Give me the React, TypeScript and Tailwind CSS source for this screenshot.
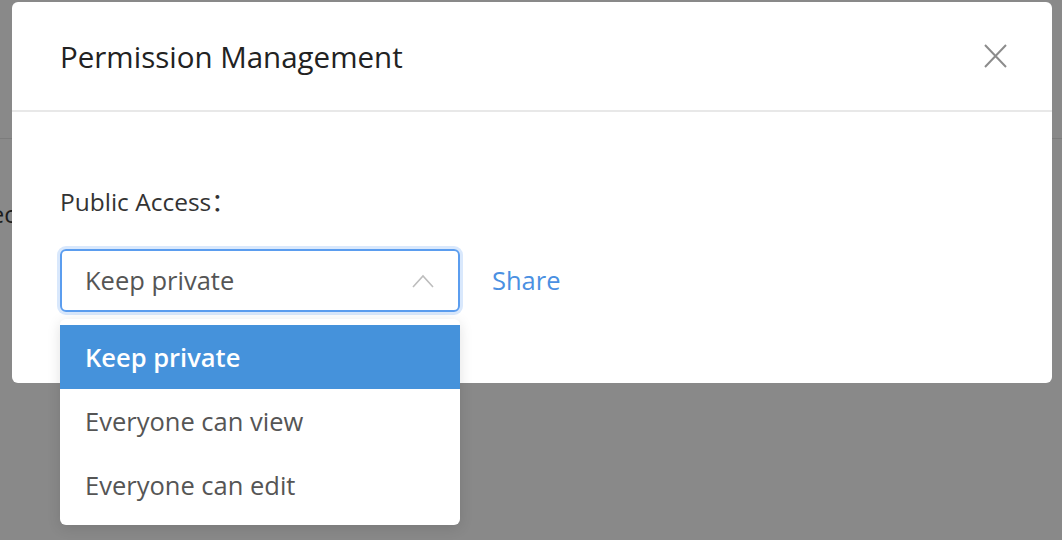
import React from 'react'

const FONT = "font-['Open_Sans','Noto_Sans','Noto_Sans_CJK_SC',sans-serif]"

const options = ['Keep private', 'Everyone can view', 'Everyone can edit']

function CloseIcon() {
  return (
    <svg width="23" height="24" viewBox="0 0 23 24" fill="none">
      <path d="M1 1L22 23M22 1L1 23" stroke="#8c8c8c" strokeWidth="2" />
    </svg>
  )
}

function ChevronUp() {
  return (
    <svg width="22" height="14" viewBox="0 0 22 14" fill="none">
      <path d="M1 13L11 2L21 13" stroke="#bdbdbd" strokeWidth="1.6" />
    </svg>
  )
}

function PermissionSelect() {
  return (
    <div className="relative w-[400px]">
      <div className="flex h-[63px] items-center justify-between rounded-[6px] border-2 border-[#5b9def] pl-[23px] pr-[24px] shadow-[0_0_0_3px_#d9e8fc]">
        <span className="text-[25.5px] text-[#555]">Keep private</span>
        <ChevronUp />
      </div>
      <div className="absolute left-0 top-[70px] w-[400px] rounded-[6px] bg-white pt-[6px] pb-[8px] shadow-[0_3px_14px_rgba(0,0,0,0.12)]">
        {options.map((o, i) => (
          <div
            key={o}
            className={
              i === 0
                ? 'flex h-16 items-center bg-[#4592db] pl-[25px] text-[25.5px] font-semibold text-white'
                : 'flex h-16 items-center pl-[25px] text-[25.5px] text-[#555]'
            }
          >
            {o}
          </div>
        ))}
      </div>
    </div>
  )
}

export default function App() {
  return (
    <div className={`relative h-[540px] w-[1062px] overflow-hidden bg-[#898989] ${FONT}`}>
      {/* page behind the overlay */}
      <div className="h-[139px] border-b border-[#7c7c7c]" />
      <div className="-ml-[37px] pt-[57px] text-[24px] text-[#1c1c1c]">Spec</div>

      {/* modal */}
      <div className="absolute left-[12px] top-[2px] h-[381px] w-[1040px] rounded-[6px] bg-white">
        <div className="flex h-[110px] items-center justify-between border-b-2 border-[#e8e8e8] pl-[48px] pr-[45px]">
          <h2 className="mt-[3px] text-[29.5px] text-[#222]">Permission Management</h2>
          <CloseIcon />
        </div>
        <div className="pl-[48px] pt-[74px]">
          <div className="text-[24.5px] leading-[32px] text-[#333]">Public Access：</div>
          <div className="mt-[31px] flex items-center gap-[32px]">
            <PermissionSelect />
            <span className="text-[25.5px] text-[#4a90e2]">Share</span>
          </div>
        </div>
      </div>
    </div>
  )
}
